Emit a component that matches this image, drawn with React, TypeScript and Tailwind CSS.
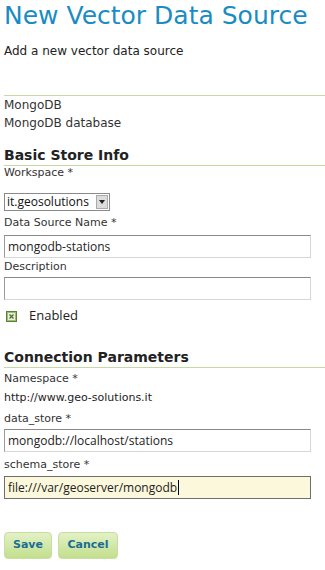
import React from "react";

const dv = { fontFamily: '"DejaVu Sans", sans-serif' };
const os = { fontFamily: '"Open Sans", "DejaVu Sans", sans-serif' };

function Label({ children, className = "" }: { children: React.ReactNode; className?: string }) {
  return <div className={`text-[11px] leading-[14px] text-[#333] ${className}`}>{children}</div>;
}

function Field({ value, focused = false, className = "" }: { value: string; focused?: boolean; className?: string }) {
  return (
    <div
      className={`flex h-[23px] w-[307px] items-center border px-[3px] text-[12px] text-[#222] ${
        focused
          ? "border-[#6e6e6e] bg-[#fcf8dc]"
          : "border-[#d6d6d6] border-t-[#8a8a8a] border-l-[#9a9a9a] bg-white"
      } ${className}`}
      style={os}
    >
      {value}
      {focused && <span className="ml-[1px] inline-block h-[15px] w-px bg-black" />}
    </div>
  );
}

function Section({ title, className = "" }: { title: string; className?: string }) {
  return (
    <div className={`border-b border-[#c5d9a0] pb-[1px] ${className}`}>
      <div className="text-[14px] font-bold leading-[18px] text-[#222]">{title}</div>
    </div>
  );
}

export default function App() {
  return (
    <div className="h-[570px] w-[325px] overflow-hidden bg-white pl-[4px]" style={dv}>
      <h1 className="pt-[1px] text-[25px] leading-[30px] text-[#1a8cc3]">New Vector Data Source</h1>
      <p className="mt-[13px] text-[12px] leading-[14px] text-[#222]">Add a new vector data source</p>

      <div className="mt-[37px] border-t border-[#c9dba5] text-[12px] leading-[18px] text-[#333]">
        <div>MongoDB</div>
        <div>MongoDB database</div>
      </div>

      <Section title="Basic Store Info" className="mt-[14px]" />
      <Label>Workspace *</Label>

      {/* workspace select */}
      <div className="mt-[13px] flex h-[18px] w-[106px] items-center border border-[#8a8a8a] bg-white" style={os}>
        <span className="flex-1 whitespace-nowrap pl-[2px] text-[12px] leading-[16px] text-[#111]">it.geosolutions</span>
        <span className="mr-[1px] flex h-[14px] w-[12px] shrink-0 items-center justify-center border border-[#aaa] bg-[#dcdcdc]">
          <svg width="6" height="4" viewBox="0 0 6 4">
            <path d="M0 0h6L3 4z" fill="#222" />
          </svg>
        </span>
      </div>

      <Label className="mt-[5px]">Data Source Name *</Label>
      <Field value="mongodb-stations" className="mt-[5px]" />
      <Label className="mt-[2px]">Description</Label>
      <Field value="" className="mt-[3px]" />

      <div className="mt-[9px] flex h-[14px] items-center pl-[2px]">
        <span className="flex h-[11px] w-[11px] items-center justify-center border border-[#5d7f3a] bg-[#9bc16c]">
          <span className="flex h-[7px] w-[7px] items-center justify-center bg-[#e8eddd]">
            <svg width="5" height="5" viewBox="0 0 5 5">
              <path d="M0.5 0.5l4 4M4.5 0.5l-4 4" stroke="#4d6a30" strokeWidth="1.2" />
            </svg>
          </span>
        </span>
        <span className="ml-[12px] text-[13px] text-[#222]" style={os}>Enabled</span>
      </div>

      <Section title="Connection Parameters" className="mt-[25px]" />
      <Label className="mt-[4px]">Namespace *</Label>
      <div className="mt-[5px] text-[11px] leading-[14px] text-[#222]">http://www.geo-solutions.it</div>
      <Label className="mt-[7px]">data_store *</Label>
      <Field value="mongodb://localhost/stations" className="mt-[3px]" />
      <Label className="mt-[6px]">schema_store *</Label>
      <Field value="file:///var/geoserver/mongodb" focused className="mt-[4px]" />

      <div className="mt-[33px] flex gap-[6px]">
        <button className="h-[27px] w-[48px] rounded-[4px] border border-[#c7dea0] bg-gradient-to-b from-[#e3f1c6] to-[#c2df8c] text-[11px] font-bold text-[#1c6d94]">
          Save
        </button>
        <button className="h-[27px] w-[60px] rounded-[4px] border border-[#c7dea0] bg-gradient-to-b from-[#e3f1c6] to-[#c2df8c] text-[11px] font-bold text-[#1c6d94]">
          Cancel
        </button>
      </div>
    </div>
  );
}
